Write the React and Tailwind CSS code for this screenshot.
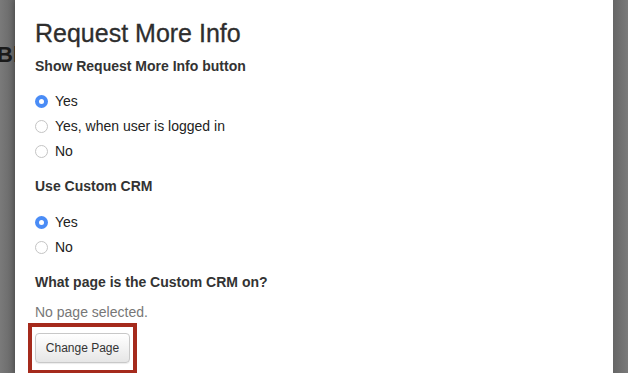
import React, { useState } from 'react';

const Radio = ({ checked, label, onChange }) => (
  <label className="flex h-[25px] cursor-pointer items-center" onClick={onChange}>
    <span
      className={`flex h-[13px] w-[13px] items-center justify-center rounded-full ${
        checked ? 'bg-[#4a8cf6]' : 'border border-[#c4c4c4] bg-white'
      }`}
    >
      {checked && <span className="h-[5px] w-[5px] rounded-full bg-white" />}
    </span>
    <span className="ml-[7px] text-[14px] text-[#222]">{label}</span>
  </label>
);

const App = () => {
  const [showBtn, setShowBtn] = useState('yes');
  const [crm, setCrm] = useState('yes');

  return (
    <div
      className="flex h-[373px] w-[628px] overflow-hidden bg-[#767676]"
      style={{ fontFamily: '"Liberation Sans", Arial, sans-serif' }}
    >
      <div className="w-[15px] shrink-0 overflow-hidden bg-gradient-to-r from-[#7a7a7a] to-[#666]">
        <div className="mt-[43px] -ml-[3px] whitespace-nowrap text-[22px] font-bold leading-[24px] text-[#1a1a1a]">
          Bl
        </div>
      </div>

      <div className="w-[598px] shrink-0 bg-white px-5 pt-[19px] shadow-[0_0_6px_rgba(0,0,0,0.35)]">
        <h2 className="text-[25px] font-normal leading-[28px] text-[#2e2e2e] [-webkit-text-stroke:0.3px_#2e2e2e]">
          Request More Info
        </h2>

        <div className="mt-[11px] text-[14px] font-bold leading-[16px] text-[#333]">
          Show Request More Info button
        </div>
        <div className="mt-[15px] flex flex-col">
          <Radio checked={showBtn === 'yes'} label="Yes" onChange={() => setShowBtn('yes')} />
          <Radio
            checked={showBtn === 'logged'}
            label="Yes, when user is logged in"
            onChange={() => setShowBtn('logged')}
          />
          <Radio checked={showBtn === 'no'} label="No" onChange={() => setShowBtn('no')} />
        </div>

        <div className="mt-[14px] text-[14px] font-bold leading-[16px] text-[#333]">Use Custom CRM</div>
        <div className="mt-[16px] flex flex-col">
          <Radio checked={crm === 'yes'} label="Yes" onChange={() => setCrm('yes')} />
          <Radio checked={crm === 'no'} label="No" onChange={() => setCrm('no')} />
        </div>

        <div className="mt-[14px] text-[14px] font-bold leading-[16px] text-[#333]">
          What page is the Custom CRM on?
        </div>
        <div className="mt-[14px] text-[14px] leading-[16px] text-[#777]">No page selected.</div>

        <div className="mt-[3px] -ml-[7px] inline-block border-[4px] border-[#a52a1c] px-[3px] pt-[6px] pb-[7px]">
          <button className="h-[30px] w-[95px] rounded-[4px] border border-[#c8c8c8] bg-gradient-to-b from-white to-[#e6e6e6] text-[12px] text-[#333] shadow-[0_1px_1px_rgba(0,0,0,0.08)]">
            Change Page
          </button>
        </div>
      </div>

      <div className="flex-1 bg-gradient-to-r from-[#666] to-[#7a7a7a]" />
    </div>
  );
};

export default App;
